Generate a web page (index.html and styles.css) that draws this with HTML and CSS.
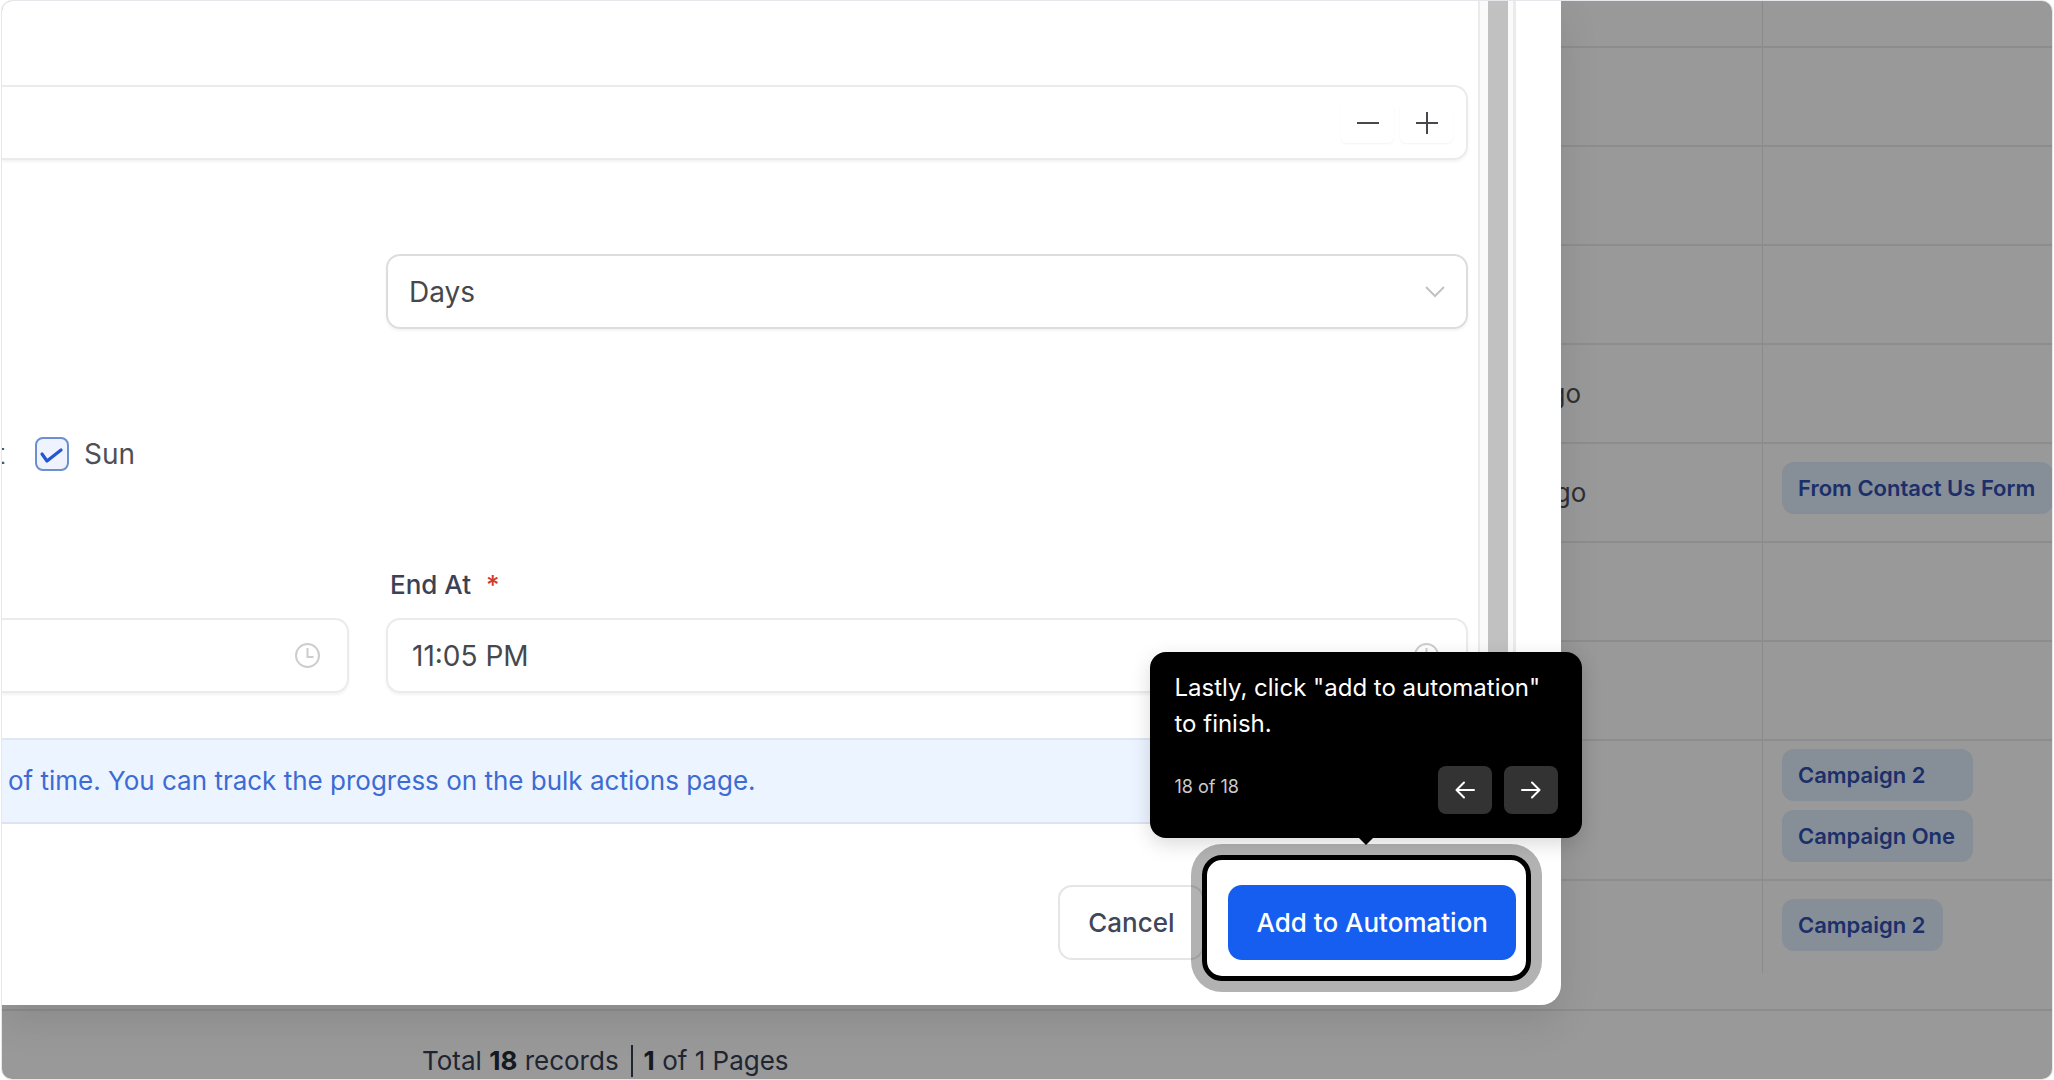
FILE: index.html
```html
<!DOCTYPE html>
<html lang="en">
<head>
    <meta charset="UTF-8">
    <meta name="viewport" content="width=device-width, initial-scale=1.0">
    <title>Add to Automation</title>
    <link rel="stylesheet" href="styles.css">
</head>
<body>
    <div class="frame">
        <div class="page">
            <table class="contacts">
                <colgroup>
                    <col class="col-name">
                    <col class="col-activity">
                    <col class="col-tags">
                </colgroup>
                <tbody>
                    <tr class="first"><td></td><td></td><td></td></tr>
                    <tr><td></td><td></td><td></td></tr>
                    <tr><td></td><td></td><td></td></tr>
                    <tr><td></td><td></td><td></td></tr>
                    <tr><td></td><td>21 hours ago</td><td></td></tr>
                    <tr>
                        <td></td>
                        <td>22 hours ago</td>
                        <td><div class="tags"><span class="tag">From Contact Us Form</span></div></td>
                    </tr>
                    <tr><td></td><td></td><td></td></tr>
                    <tr><td></td><td></td><td></td></tr>
                    <tr class="tall">
                        <td></td>
                        <td></td>
                        <td>
                            <div class="tags">
                                <span class="tag">Campaign 2</span>
                                <span class="tag">Campaign One</span>
                            </div>
                        </td>
                    </tr>
                    <tr class="last">
                        <td></td>
                        <td></td>
                        <td><div class="tags"><span class="tag">Campaign 2</span></div></td>
                    </tr>
                </tbody>
            </table>
            <div class="pagination">
                <span>Total <b>18</b> records</span>
                <span class="pages"><b>1</b> of 1 Pages</span>
            </div>
        </div>

        <div class="overlay">
            <div class="modal">
                <div class="modal-body">
                    <form class="form">
                        <div class="field quantity">
                            <input type="text" aria-label="Quantity">
                            <button type="button" class="step" aria-label="Decrease">
                                <svg width="22" height="22" viewBox="0 0 22 22"><path d="M0 11h22"/></svg>
                            </button>
                            <button type="button" class="step" aria-label="Increase">
                                <svg width="22" height="22" viewBox="0 0 22 22"><path d="M0 11h22M11 0v22"/></svg>
                            </button>
                        </div>

                        <div class="row interval">
                            <div class="field select">
                                <select aria-label="Repeat after">
                                    <option>Days</option>
                                </select>
                                <svg width="20" height="12" viewBox="0 0 20 12"><path d="M1 1l9 9 9-9"/></svg>
                            </div>
                        </div>

                        <div class="days">
                            <span class="cut-label">Sat</span>
                            <input type="checkbox" id="sun" checked>
                            <label for="sun">Sun</label>
                        </div>

                        <div class="row times">
                            <div class="field start">
                                <input type="text" aria-label="Start At">
                                <svg class="clock" width="25" height="25" viewBox="0 0 25 25"><circle cx="12.5" cy="12.5" r="11.5"/><path d="M12.5 5v9h6"/></svg>
                            </div>
                            <div class="end">
                                <label for="end-at">End At <span class="required">*</span></label>
                                <div class="field">
                                    <input type="text" id="end-at" value="11:05 PM">
                                    <svg class="clock" width="25" height="25" viewBox="0 0 25 25"><circle cx="12.5" cy="12.5" r="11.5"/><path d="M12.5 5v9h6"/></svg>
                                </div>
                            </div>
                        </div>
                    </form>
                    <div class="scrollbar"><div class="thumb"></div></div>
                </div>

                <div class="notice">of time. You can track the progress on the bulk actions page.</div>

                <div class="modal-footer">
                    <button type="button" class="btn">Cancel</button>
                    <div class="target">
                        <button type="button" class="btn btn-primary">Add to Automation</button>
                        <div class="spotlight"></div>
                        <div class="tooltip">
                            <p>Lastly, click "add to automation" to finish.</p>
                            <div class="tooltip-nav">
                                <span class="count">18 of 18</span>
                                <button type="button" aria-label="Previous">
                                    <svg width="20" height="18" viewBox="0 0 20 18"><path d="M19 9H2M9 1.500L1.500 9L9 16.500"/></svg>
                                </button>
                                <button type="button" aria-label="Next">
                                    <svg width="20" height="18" viewBox="0 0 20 18"><path d="M1 9h17M11 1.500L18.500 9L11 16.500"/></svg>
                                </button>
                            </div>
                        </div>
                    </div>
                </div>
            </div>
        </div>
    </div>
</body>
</html>
```
FILE: styles.css
```css
* {
    box-sizing: border-box;
    margin: 0;
    padding: 0;
}

body {
    background-color: white;
    padding: 0 1px;
    font-family: Inter, "Liberation Sans", sans-serif;
    font-size: 26px;
    line-height: 32px;
}

input, select, button {
    font-family: inherit;
    font-size: inherit;
    color: inherit;
    border: none;
    background: none;
    outline: none;
}

svg {
    fill: none;
    stroke: currentColor;
    stroke-width: 2;
    flex-shrink: 0;
}

.frame {
    position: relative;
    border: 1px solid #e5e7eb;
    border-radius: 11px;
    overflow: hidden;
}

/* contacts list behind the modal */
.contacts {
    width: 100%;
    table-layout: fixed;
    border-collapse: separate;
    border-spacing: 0;
}

.col-name {
    width: 68%;
}

.col-tags {
    width: 14.1%;
}

.contacts tr {
    height: 99px;
}

.contacts .first {
    height: 47px;
}

.contacts .tall {
    height: 140px;
}

.contacts .last {
    height: 92px;
}

.contacts td {
    border-bottom: 2px solid #ececec;
    border-right: 1px solid #e6e6e6;
    padding-left: 28px;
    color: #4c4f54;
    white-space: nowrap;
}

.contacts td:last-child {
    border-right: none;
    padding-left: 19px;
}

.contacts .last td {
    border-bottom: none;
}

.tags {
    display: inline-grid;
    gap: 9px;
    padding-bottom: 10px;
    vertical-align: middle;
}

.last .tags {
    padding-bottom: 4px;
}

.tag {
    padding: 10px 18px 10px 16px;
    border-radius: 12px;
    background-color: #dfedfd;
    color: #304fb0;
    font-size: 22px;
    font-weight: 600;
}

.pagination {
    display: flex;
    margin-top: 36px;
    padding: 34px 0 2px 420px;
    border-top: 2px solid #ececec;
    color: #344054;
}

.pagination b {
    color: #222a3a;
}

.pages {
    margin-left: 12px;
    padding-left: 11px;
    border-left: 2px solid #344054;
}

/* modal */
.overlay {
    position: absolute;
    inset: 0;
    display: grid;
    grid-template-columns: 1559fr 491fr;
    align-items: start;
    background-color: rgba(0, 0, 0, 0.4);
}

.modal {
    background-color: white;
    border-radius: 0 0 20px 0;
    box-shadow: 0 16px 40px rgba(0, 0, 0, 0.1);
}

.modal-body {
    display: flex;
    padding-right: 45px;
}

.form {
    flex: 1;
    padding: 84px 10px 45px 0;
}

.field {
    display: flex;
    align-items: center;
    height: 75px;
    border: 2px solid #ebebec;
    border-radius: 14px;
    box-shadow: 0 2px 3px rgba(16, 24, 40, 0.05);
    font-size: 28px;
    color: #46484c;
}

.field input {
    flex: 1;
    min-width: 0;
    height: 100%;
    padding-left: 24px;
}

.quantity, .start {
    border-left: none;
    border-radius: 0 14px 14px 0;
}

.quantity {
    gap: 6px;
    padding-right: 13px;
}

.step {
    display: flex;
    align-items: center;
    justify-content: center;
    width: 53px;
    height: 40px;
    border-radius: 6px;
    box-shadow: 0 1px 2px rgba(16, 24, 40, 0.05);
}

.row {
    display: grid;
    grid-template-columns: minmax(0, 347fr) minmax(0, 1082fr);
    column-gap: 37px;
}

.interval {
    margin-top: 94px;
}

.select {
    grid-column: 2;
    position: relative;
    border-color: #dcdddf;
}

.select select {
    width: 100%;
    height: 100%;
    padding-left: 21px;
    appearance: none;
}

.select svg {
    position: absolute;
    right: 21px;
    color: #c2c2c4;
    pointer-events: none;
}

.days {
    display: flex;
    align-items: center;
    height: 34px;
    margin-top: 108px;
    font-size: 28px;
    color: #4d5057;
}

.cut-label {
    display: flex;
    justify-content: flex-end;
    width: 3px;
    margin-right: 30px;
}

.days input {
    width: 34px;
    height: 34px;
    margin-right: 15px;
    appearance: none;
    border: 2px solid #6b8fd0;
    border-radius: 8px;
    background: #eef3fd url("data:image/svg+xml,%3Csvg xmlns='http://www.w3.org/2000/svg' viewBox='0 0 30 30' fill='none' stroke='%232456cf' stroke-width='3.200' stroke-linecap='round' stroke-linejoin='round'%3E%3Cpath d='M5 15l5 7L24 11'/%3E%3C/svg%3E");
}

.times {
    align-items: end;
    margin-top: 98px;
}

.end label {
    display: block;
    margin: 0 0 17px 4px;
    font-weight: 500;
    color: #3b4256;
}

.required {
    margin-left: 8px;
    color: #d0392b;
}

.clock {
    margin-right: 27px;
    color: #cdcdcf;
}

.scrollbar {
    display: flex;
    width: 38px;
    padding: 0 5px 0 8px;
    border-left: 2px solid #ebebeb;
    border-right: 3px solid #ebebeb;
    background-color: #fafafa;
}

.thumb {
    flex: 1;
    background-color: #c1c1c1;
}

.notice {
    padding: 25px 6px;
    border-top: 2px solid #dce8f2;
    border-bottom: 2px solid #dde3f2;
    background-color: #ebf4ff;
    color: #3d6bd3;
}

.modal-footer {
    display: flex;
    justify-content: flex-end;
    gap: 24px;
    padding: 61px 45px 45px;
}

.btn {
    height: 75px;
    padding: 0 28px;
    border: 2px solid #e4e5e7;
    border-radius: 14px;
    font-weight: 500;
    color: #404759;
}

.btn-primary {
    padding: 0 26px;
    border-color: #155eef;
    background-color: #155eef;
    color: white;
}

/* guided tour step */
.target {
    position: relative;
}

.spotlight {
    position: absolute;
    inset: -30px -15px -21px -26px;
    border: 5px solid black;
    border-radius: 20px;
    box-shadow: 0 0 0 11px rgba(0, 0, 0, 0.3);
    pointer-events: none;
}

.tooltip {
    position: absolute;
    left: -78px;
    bottom: calc(100% + 47px);
    width: 432px;
    padding: 18px 24px 24px;
    border-radius: 16px;
    background-color: black;
    box-shadow: 0 6px 20px rgba(0, 0, 0, 0.15);
    color: white;
}

.tooltip::after {
    content: "";
    position: absolute;
    top: 100%;
    left: 50%;
    margin-left: -7px;
    border: 7px solid transparent;
    border-top-color: black;
    border-bottom: none;
}

.tooltip p {
    font-size: 24px;
    line-height: 36px;
}

.tooltip-nav {
    display: flex;
    gap: 12px;
    margin-top: 24px;
}

.count {
    flex: 1;
    padding-top: 5px;
    font-size: 18px;
    color: #ccc;
}

.tooltip-nav button {
    display: flex;
    align-items: center;
    justify-content: center;
    width: 54px;
    height: 48px;
    border-radius: 8px;
    background-color: #333;
}

.tooltip-nav svg {
    stroke-linecap: round;
    stroke-linejoin: round;
}
```
